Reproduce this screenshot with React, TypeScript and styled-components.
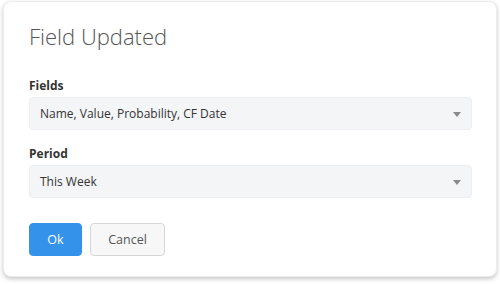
import styled, { createGlobalStyle } from 'styled-components';

const GlobalStyle = createGlobalStyle`
    html, body {
        margin: 0;
        padding: 0;
        background: #ffffff;
        font-family: "Open Sans", "Liberation Sans", sans-serif;
    }
`;

const Page = styled.div`
    width: 500px;
    height: 284px;
    padding: 1px 3px 0 3px;
    box-sizing: border-box;
`;

const Card = styled.div`
    width: 494px;
    height: 276px;
    box-sizing: border-box;
    background: #ffffff;
    border-radius: 8px;
    border: 1px solid #ececec;
    box-shadow: 0 2px 4px rgba(0, 0, 0, 0.22);
    padding: 18px 25px 0 25px;
    display: flex;
    flex-direction: column;
`;

const Title = styled.h1`
    margin: 0;
    font-size: 22px;
    font-weight: 300;
    color: #555555;
    line-height: 32px;
`;

const Field = styled.div<{ $top: number }>`
    display: flex;
    flex-direction: column;
    margin-top: ${(p) => p.$top}px;
`;

const Label = styled.label`
    font-size: 12px;
    font-weight: 700;
    color: #333333;
    line-height: 18px;
    margin-bottom: 2px;
`;

const Select = styled.div`
    width: 443px;
    height: 33px;
    box-sizing: border-box;
    background: #f4f5f7;
    border: 1px solid #eceef1;
    border-radius: 4px;
    display: flex;
    align-items: center;
    justify-content: space-between;
    padding: 0 10px 0 10px;
    font-size: 12px;
    color: #333333;
`;

const Caret = styled.span`
    width: 0;
    height: 0;
    border-left: 4.5px solid transparent;
    border-right: 4.5px solid transparent;
    border-top: 5px solid #8a8a8a;
    margin-top: 1px;
`;

const Actions = styled.div`
    display: flex;
    gap: 8px;
    margin-top: 25px;
`;

const Button = styled.button<{ $primary?: boolean }>`
    height: 33px;
    box-sizing: border-box;
    border-radius: 4px;
    font-family: inherit;
    font-size: 12.5px;
    padding: 0;
    width: ${(p) => (p.$primary ? '53px' : '75px')};
    background: ${(p) => (p.$primary ? '#3592ea' : '#f7f7f8')};
    color: ${(p) => (p.$primary ? '#ffffff' : '#555555')};
    border: 1px solid ${(p) => (p.$primary ? '#3592ea' : '#d6d6d6')};
`;

function App() {
    return (
        <Page>
            <GlobalStyle />
            <Card>
                <Title>Field Updated</Title>
                <Field $top={25}>
                    <Label>Fields</Label>
                    <Select>
                        Name, Value, Probability, CF Date
                        <Caret />
                    </Select>
                </Field>
                <Field $top={15}>
                    <Label>Period</Label>
                    <Select>
                        This Week
                        <Caret />
                    </Select>
                </Field>
                <Actions>
                    <Button $primary>Ok</Button>
                    <Button>Cancel</Button>
                </Actions>
            </Card>
        </Page>
    );
}

export default App;
